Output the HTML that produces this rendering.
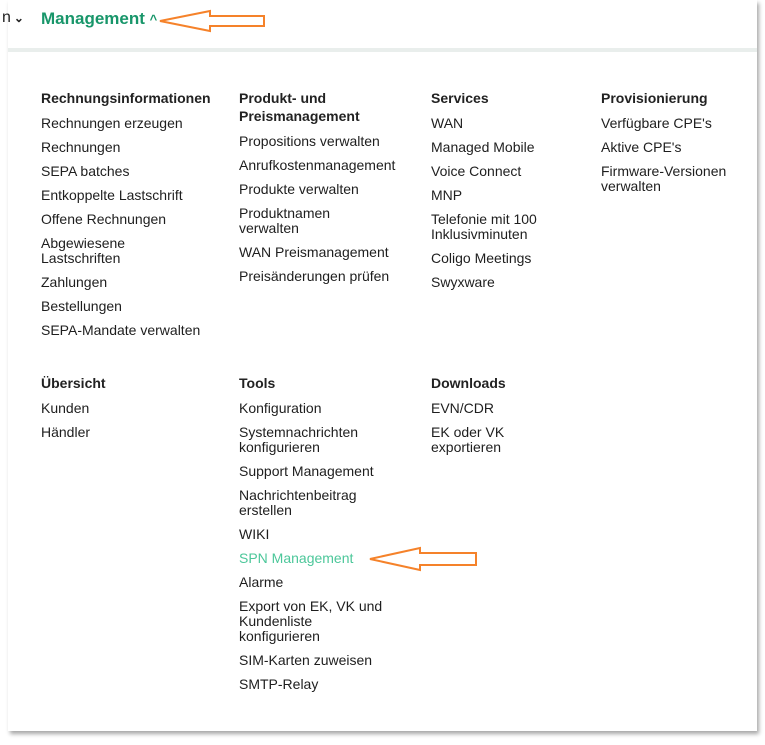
<!DOCTYPE html>
<html><head><meta charset="utf-8"><style>
body{margin:0;width:765px;height:745px;background:#fff;position:relative;overflow:hidden;font-family:"Liberation Sans",sans-serif;color:#1e1e1e}
.panel{position:absolute;left:8px;top:0;width:749px;height:731px;background:#fff;box-shadow:2px 3px 4px rgba(0,0,0,.35)}
.sep{position:absolute;left:8px;top:48px;width:749px;height:4px;background:#e9eeec}
.col{position:absolute;font-size:14px}
.col h4{margin:0 0 9px;font-size:14px;line-height:18px;font-weight:bold;color:#222}
.col div{line-height:15px;margin-bottom:9px}
.g{color:#4cc79a}
</style></head><body>
<div class="panel"></div>
<div class="sep"></div>
<div style="position:absolute;left:2px;top:9px;font-size:16px;">n<span style="font-size:12px;font-weight:bold;margin-left:3px">&#8964;</span></div>
<div style="position:absolute;left:41px;top:9px;font-size:17px;font-weight:bold;color:#18966a">Management <span style="font-size:13px;font-weight:bold">^</span></div>
<svg style="position:absolute;left:158px;top:9px" width="110" height="24"><path d="M2 12 L52 2 L52 7 L106 7 L106 17 L52 17 L52 22 Z" fill="none" stroke="#f5822a" stroke-width="2"/></svg>
<svg style="position:absolute;left:368px;top:546px" width="112" height="26"><path d="M2 13 L52 2 L52 7 L108 7 L108 19 L52 19 L52 24 Z" fill="none" stroke="#f5822a" stroke-width="2"/></svg>

<div class="col" style="left:41px;top:89px;width:185px">
<h4>Rechnungsinformationen</h4>
<div>Rechnungen erzeugen</div><div>Rechnungen</div><div>SEPA batches</div><div>Entkoppelte Lastschrift</div><div>Offene Rechnungen</div><div>Abgewiesene<br>Lastschriften</div><div>Zahlungen</div><div>Bestellungen</div><div>SEPA-Mandate verwalten</div>
</div>
<div class="col" style="left:239px;top:89px;width:180px">
<h4>Produkt- und<br>Preismanagement</h4>
<div>Propositions verwalten</div><div>Anrufkostenmanagement</div><div>Produkte verwalten</div><div>Produktnamen<br>verwalten</div><div>WAN Preismanagement</div><div>Preisänderungen prüfen</div>
</div>
<div class="col" style="left:431px;top:89px;width:160px">
<h4>Services</h4>
<div>WAN</div><div>Managed Mobile</div><div>Voice Connect</div><div>MNP</div><div>Telefonie mit 100<br>Inklusivminuten</div><div>Coligo Meetings</div><div>Swyxware</div>
</div>
<div class="col" style="left:601px;top:89px;width:150px">
<h4>Provisionierung</h4>
<div>Verfügbare CPE's</div><div>Aktive CPE's</div><div>Firmware-Versionen<br>verwalten</div>
</div>

<div class="col" style="left:41px;top:374px;width:185px">
<h4>Übersicht</h4>
<div>Kunden</div><div>Händler</div>
</div>
<div class="col" style="left:239px;top:374px;width:180px">
<h4>Tools</h4>
<div>Konfiguration</div><div>Systemnachrichten<br>konfigurieren</div><div>Support Management</div><div>Nachrichtenbeitrag<br>erstellen</div><div>WIKI</div><div class="g">SPN Management</div><div>Alarme</div><div>Export von EK, VK und<br>Kundenliste<br>konfigurieren</div><div>SIM-Karten zuweisen</div><div>SMTP-Relay</div>
</div>
<div class="col" style="left:431px;top:374px;width:160px">
<h4>Downloads</h4>
<div>EVN/CDR</div><div>EK oder VK<br>exportieren</div>
</div>
</body></html>
